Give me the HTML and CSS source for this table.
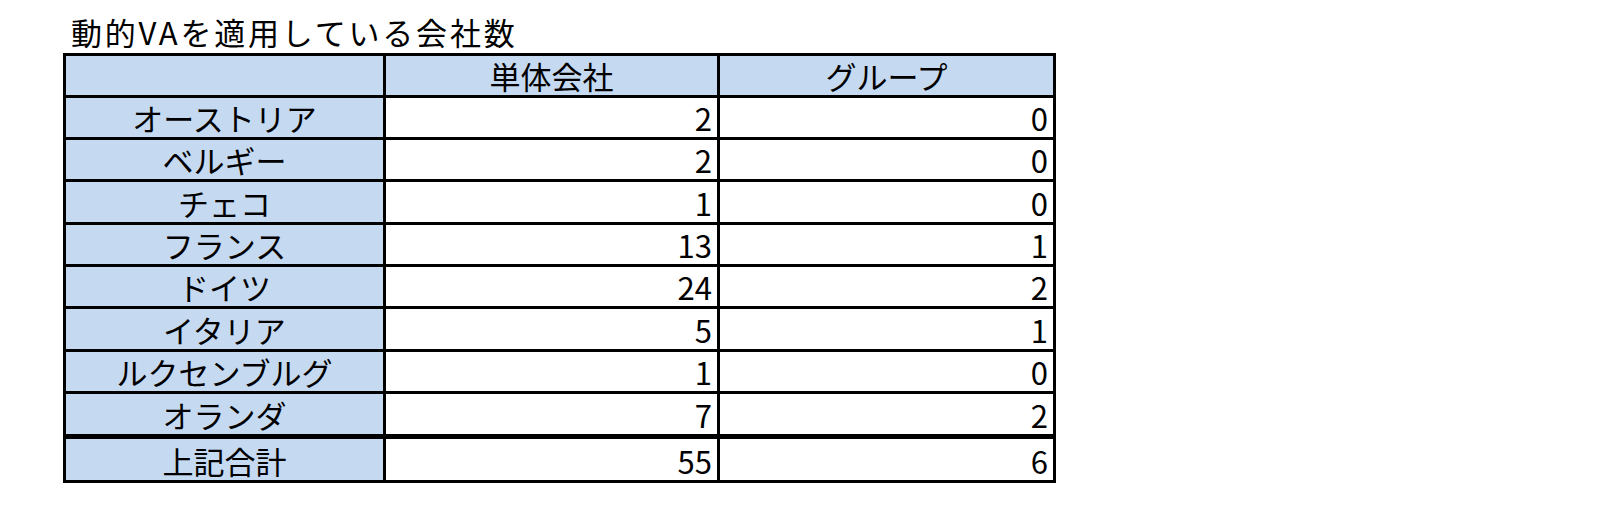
FILE: index.html
```html
<!DOCTYPE html>
<html lang="ja">
<head>
<meta charset="utf-8">
<title>動的VAを適用している会社数</title>
<link rel="stylesheet" href="styles.css">
</head>
<body>
<div class="page">
  <h1 class="title">動的VAを適用している会社数</h1>
  <table class="va-table">
    <colgroup>
      <col class="c-name">
      <col class="c-num">
      <col class="c-num2">
    </colgroup>
    <thead>
      <tr class="head-row">
        <th class="label"></th>
        <th class="label">単体会社</th>
        <th class="label">グループ</th>
      </tr>
    </thead>
    <tbody>
      <tr><th class="label">オーストリア</th><td class="num">2</td><td class="num">0</td></tr>
      <tr><th class="label">ベルギー</th><td class="num">2</td><td class="num">0</td></tr>
      <tr><th class="label">チェコ</th><td class="num">1</td><td class="num">0</td></tr>
      <tr><th class="label">フランス</th><td class="num">13</td><td class="num">1</td></tr>
      <tr><th class="label">ドイツ</th><td class="num">24</td><td class="num">2</td></tr>
      <tr><th class="label">イタリア</th><td class="num">5</td><td class="num">1</td></tr>
      <tr><th class="label">ルクセンブルグ</th><td class="num">1</td><td class="num">0</td></tr>
      <tr><th class="label">オランダ</th><td class="num">7</td><td class="num">2</td></tr>
    </tbody>
    <tfoot>
      <tr class="total-row"><th class="label">上記合計</th><td class="num">55</td><td class="num">6</td></tr>
    </tfoot>
  </table>
</div>
</body>
</html>
```

FILE: styles.css
```css
html, body {
  margin: 0;
  padding: 0;
  background: #ffffff;
}

body {
  font-family: "Noto Sans CJK JP", "Noto Sans", sans-serif;
  color: #000000;
}

.page {
  padding: 11px 0 0 63px;
}

.title {
  margin: 0 0 0 8px;
  font-size: 31px;
  font-weight: 400;
  line-height: 42px;
  letter-spacing: 2.8px;
  white-space: nowrap;
}

.va-table {
  border-collapse: collapse;
  table-layout: fixed;
  width: 990px;
  border: 3px solid #000000;
}

.c-name { width: 320px; }
.c-num { width: 334px; }
.c-num2 { width: 336px; }

.va-table th,
.va-table td {
  border: 3px solid #000000;
  padding: 0 5px 2px 5px;
  height: 37.4px;
  font-size: 31px;
  line-height: 34px;
  font-weight: 400;
  vertical-align: bottom;
  white-space: nowrap;
}

.va-table .label {
  background: #c5d9f1;
  text-align: center;
}

.va-table .num {
  background: #ffffff;
  text-align: right;
}

.head-row th {
  height: 36.5px;
}

.total-row th,
.total-row td {
  border-top: 5px solid #000000;
  height: 39px;
}
```
